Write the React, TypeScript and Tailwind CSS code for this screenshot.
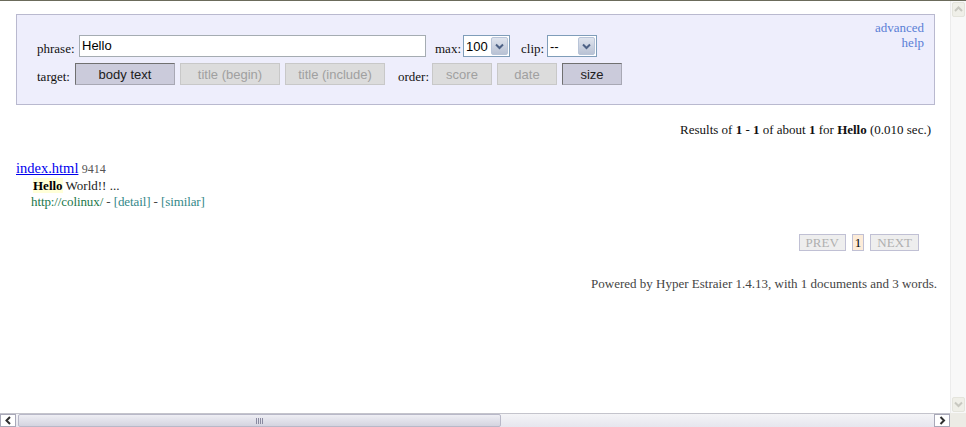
import React from "react";

const serif = "font-['Liberation_Serif','Times_New_Roman',serif]";
const sans = "font-['Liberation_Sans',Arial,sans-serif]";

function Select({ value, width }: { value: string; width: string }) {
  return (
    <div
      className={`${width} h-[22px] flex items-center border border-[#7f9db9] bg-white pl-[2px] pr-[1px] ${sans} text-[13px] text-[#000]`}
    >
      <span className="flex-1 leading-none">{value}</span>
      <div className="w-[17px] h-[18px] flex items-center justify-center rounded-[2px] border border-[#b8c4d8] bg-gradient-to-b from-[#dfe4ee] to-[#b9c2d4]">
        <svg width="9" height="7" viewBox="0 0 9 7">
          <path d="M1 1.5 L4.5 5 L8 1.5" stroke="#4d6185" strokeWidth="2" fill="none" />
        </svg>
      </div>
    </div>
  );
}

function Btn({ label, active, width }: { label: string; active?: boolean; width: string }) {
  return (
    <div
      className={`${width} h-[22px] flex items-center justify-center ${sans} text-[13px] leading-none border ${
        active
          ? "bg-[#cbcbdb] text-[#202020] border-t-[#707070] border-l-[#707070] border-b-[#a8a8b4] border-r-[#a8a8b4]"
          : "bg-[#dcdcdc] text-[#a0a0a0] border-[#c8c8c8]"
      }`}
    >
      {label}
    </div>
  );
}

function Label({ text, width }: { text: string; width: string }) {
  return (
    <span className={`${width} ${serif} text-[13px] leading-[15px] text-[#111] pb-[1px]`}>{text}</span>
  );
}

function Chevron({ dir, color }: { dir: "up" | "down" | "left" | "right"; color: string }) {
  const d = {
    up: "M1 6 L4.5 2.5 L8 6",
    down: "M1 2.5 L4.5 6 L8 2.5",
    left: "M6 1 L2.5 4.5 L6 8",
    right: "M2.5 1 L6 4.5 L2.5 8",
  }[dir];
  return (
    <svg width="9" height="9" viewBox="0 0 9 9">
      <path d={d} stroke={color} strokeWidth="2" fill="none" />
    </svg>
  );
}

export default function App() {
  return (
    <div className="w-[966px] h-[427px] overflow-hidden bg-white flex flex-col">
      <div className="h-px bg-[#6b6b5b]" />
      <div className="flex flex-1 min-h-0">
        <main className={`flex-1 ${serif} text-[13px] text-[#111]`}>
          {/* search panel */}
          <div className="ml-[16px] mt-[13px] w-[919px] h-[91px] border border-[#b9b9cf] bg-[#eeeefc] flex justify-between pl-[20px] pr-[10px] pt-[5px]">
            <div className="flex flex-col gap-[6px] mt-[15px]">
              <div className="flex items-end">
                <Label text="phrase:" width="w-[42px]" />
                <div className={`w-[347px] h-[22px] border border-[#a5acb2] bg-white flex items-center pl-[2px] ${sans} text-[13px] text-black`}>
                  Hello
                </div>
                <span className="w-[9px]" />
                <Label text="max:" width="w-[28px]" />
                <Select value="100" width="w-[47px]" />
                <span className="w-[11px]" />
                <Label text="clip:" width="w-[26px]" />
                <Select value="--" width="w-[50px]" />
              </div>
              <div className="flex items-end">
                <Label text="target:" width="w-[38px]" />
                <div className="flex gap-[5px]">
                  <Btn label="body text" active width="w-[100px]" />
                  <Btn label="title (begin)" width="w-[100px]" />
                  <Btn label="title (include)" width="w-[100px]" />
                </div>
                <span className="w-[13px]" />
                <Label text="order:" width="w-[34px]" />
                <div className="flex gap-[5px]">
                  <Btn label="score" width="w-[60px]" />
                  <Btn label="date" width="w-[60px]" />
                  <Btn label="size" active width="w-[60px]" />
                </div>
              </div>
            </div>
            <div className="flex flex-col items-end leading-[15px] text-[13px] text-[#5b7fd6]">
              <a>advanced</a>
              <a>help</a>
            </div>
          </div>

          {/* hits summary */}
          <div className="mt-[17px] pr-[19px] text-right leading-[15px]">
            Results of <b>1</b> - <b>1</b> of about <b>1</b> for <b>Hello</b> (0.010 sec.)
          </div>

          {/* result */}
          <div className="mt-[23px] pl-[16px]">
            <div className="leading-[17px]">
              <a className="text-[14.5px] text-[#0000ee] underline">index.html</a>{" "}
              <span className="text-[12px] text-[#555]">9414</span>
            </div>
            <div className="pl-[17px] leading-[16px] text-[13px] text-[#222]">
              <b className="bg-[#ffffd8] text-black">Hello</b> World!! ...
            </div>
            <div className="pl-[15px] leading-[16px] text-[13px] tracking-[-0.1px]">
              <span className="text-[#22774a]">http://colinux/</span>
              <span className="text-[#444]"> - </span>
              <a className="text-[#338888]">[detail]</a>
              <span className="text-[#444]"> - </span>
              <a className="text-[#338888]">[similar]</a>
            </div>
          </div>

          {/* pagination */}
          <div className="mt-[24px] pr-[31px] flex justify-end items-center gap-[6px] text-[13px]">
            <span className="h-[17px] px-[6px] flex items-center border border-[#c0c0d4] bg-[#eeeeee] text-[#b0b0b0]">PREV</span>
            <span className="h-[17px] px-[2px] flex items-center border border-[#c0c0d4] bg-[#fdecd8] text-black">1</span>
            <span className="h-[17px] px-[6px] flex items-center border border-[#c0c0d4] bg-[#eeeeee] text-[#b0b0b0]">NEXT</span>
          </div>

          {/* footer */}
          <div className="mt-[25px] pr-[13px] text-right text-[13px] text-[#444] leading-[15px]">
            Powered by Hyper Estraier 1.4.13, with 1 documents and 3 words.
          </div>
        </main>

        {/* vertical scrollbar */}
        <div className="w-[16px] border-l border-[#ececec] bg-[#f8f8f8] flex flex-col justify-between pt-[1px] pb-[1px]">
          <div className="mx-[1px] h-[15px] rounded-[2px] border border-[#e4e4dc] bg-[#efefe8] flex items-center justify-center">
            <Chevron dir="up" color="#c8c8c0" />
          </div>
          <div className="mx-[1px] h-[15px] rounded-[2px] border border-[#e4e4dc] bg-[#efefe8] flex items-center justify-center">
            <Chevron dir="down" color="#c8c8c0" />
          </div>
        </div>
      </div>

      {/* horizontal scrollbar */}
      <div className="h-[14px] flex">
        <div className="flex-1 flex border-t border-[#c4c4cc] bg-gradient-to-b from-[#f4f4f7] to-[#e6e6ee]">
          <div className="w-[16px] h-full border border-[#a8a8b8] bg-white flex items-center justify-center">
            <Chevron dir="left" color="#303030" />
          </div>
          <div className="ml-[2px] w-[483px] h-full rounded-[2px] border border-[#b8b8c8] bg-gradient-to-b from-[#eeeef4] to-[#d4d4e0] flex items-center justify-center gap-[1px]">
            <span className="w-px h-[6px] bg-[#8a8aa0]" />
            <span className="w-px h-[6px] bg-[#8a8aa0]" />
            <span className="w-px h-[6px] bg-[#8a8aa0]" />
            <span className="w-px h-[6px] bg-[#8a8aa0]" />
          </div>
          <div className="flex-1" />
          <div className="w-[16px] h-full border border-[#a8a8b8] bg-white flex items-center justify-center">
            <Chevron dir="right" color="#303030" />
          </div>
        </div>
        <div className="w-[16px] bg-[#ecebe5]" />
      </div>
    </div>
  );
}
